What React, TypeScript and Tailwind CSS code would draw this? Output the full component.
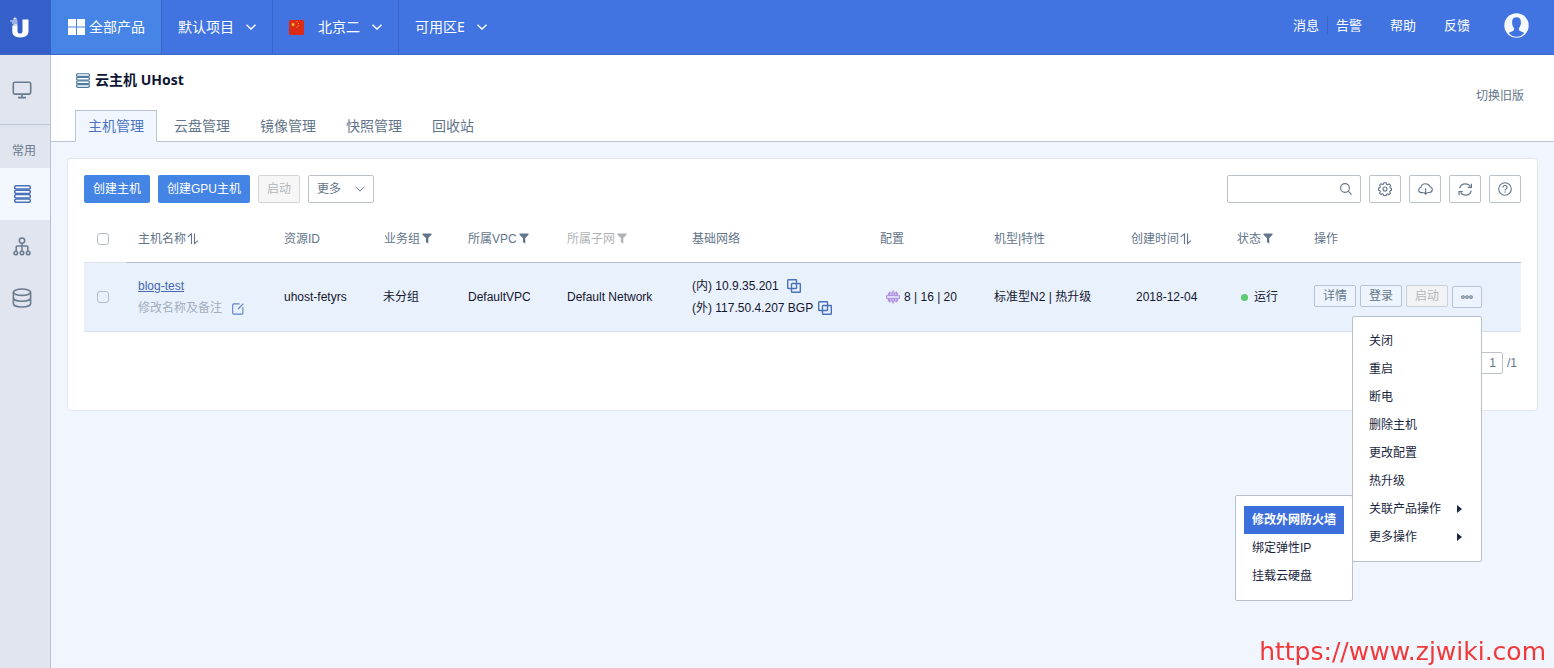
import React, { ReactNode } from "react";

const Chevron = ({ thin }: { thin?: boolean }) => (
  <svg width="10" height="6" viewBox="0 0 10 6" fill="none" stroke="currentColor" strokeWidth={thin ? 1 : 1.4} aria-hidden="true">
    <path d="M0.5 0.700 5 5.100 9.500 0.700" />
  </svg>
);

const SortIcon = () => (
  <svg width="12" height="12" viewBox="0 0 12 12" fill="none" stroke="currentColor" strokeWidth="1.1" aria-hidden="true">
    <path d="M0.800 3.800 4.500 0.900v10.100M7.500 0.500V10.600l3.300-3" />
  </svg>
);

const FilterIcon = () => (
  <svg width="10" height="11" viewBox="0 0 10 11" fill="currentColor" aria-hidden="true">
    <path d="M0.500 0.500h9v1.200L6.300 5v5.500L3.900 9.300V5L0.500 1.700z" />
  </svg>
);

const StackIcon = ({ size }: { size: number }) => (
  <svg width={size} height={size + 1} viewBox="0 0 17 18" fill="none" stroke="currentColor" strokeWidth="1.5" aria-hidden="true">
    <rect x="0.700" y="0.800" width="15.600" height="3.300" rx="1.500" />
    <rect x="0.700" y="5.200" width="15.600" height="3.300" rx="1.500" />
    <rect x="0.700" y="9.600" width="15.600" height="3.300" rx="1.500" />
    <rect x="0.700" y="14" width="15.600" height="3.300" rx="1.500" />
  </svg>
);

const CopyIcon = () => (
  <svg width="14" height="14" viewBox="0 0 14 14" fill="none" stroke="currentColor" strokeWidth="1.4" aria-hidden="true">
    <rect x="0.7" y="0.7" width="8.8" height="8.8" rx="0.6" />
    <rect x="4.5" y="4.5" width="8.8" height="8.8" rx="0.6" />
  </svg>
);

const TopItem = ({ children, className = "" }: { children: ReactNode; className?: string }) => (
  <button type="button" className={`flex items-center gap-3 px-4 ${className}`}>
    {children}
  </button>
);

const SideItem = ({ label, active, children }: { label: string; active?: boolean; children: ReactNode }) => (
  <a
    href="#"
    aria-label={label}
    className={`flex h-13 items-center pl-3 ${active ? "bg-[#f2f8fe] text-[#4a72b8]" : "text-[#697b8e]"}`}
  >
    {children}
  </a>
);

const ToolButton = ({ label, children }: { label: string; children: ReactNode }) => (
  <button
    type="button"
    aria-label={label}
    className="flex h-7 w-8 items-center justify-center rounded-xs border border-[#bcc2cc] bg-white text-[#63758a]"
  >
    {children}
  </button>
);

const Check = ({ label }: { label: string }) => (
  <input
    type="checkbox"
    aria-label={label}
    className="ml-[13px] block size-3 appearance-none rounded-[3px] border border-[#b5bcc8] bg-transparent"
  />
);

const Th = ({ children, muted }: { children: ReactNode; muted?: boolean }) => (
  <th scope="col" className={`h-12 border-b border-[#b9c0cb] pl-3 text-left font-normal ${muted ? "text-[#b0b3b6]" : "text-[#63758a]"}`}>
    <span className="flex items-center gap-px whitespace-nowrap">{children}</span>
  </th>
);

const rowButton = "h-[22px] w-[42px] rounded-xs border border-[#b9c3d6] bg-[#eef4fd] text-[#63758a]";
const menuItem = "flex h-7 w-full items-center px-2 text-left whitespace-nowrap";

const actions = ["关闭", "重启", "断电", "删除主机", "更改配置", "热升级"];

const Arrow = () => (
  <svg className="mr-[3px] ml-auto" width="5" height="8" viewBox="0 0 5 8" fill="currentColor" aria-hidden="true">
    <path d="M0 0l5 4-5 4z" />
  </svg>
);

function Header() {
  return (
    <header className="flex h-[55px] border-b border-[#3d69c4] bg-[#4174e0] font-['Noto_Sans','Noto_Sans_CJK_SC',sans-serif] text-sm text-white">
      <a href="#" aria-label="UCloud" className="flex w-[51px] items-center bg-[#3660c9] pl-[10px]">
        <svg width="20" height="21" viewBox="0 0 20 21" fill="#fff" aria-hidden="true">
          <path d="M2.300 8.500H7.500V14.200c0 1.600.900 2.400 2.500 2.400s2.500-.8 2.500-2.400V2.400h6V14.200c0 3.900-3 6.200-8.200 6.200s-8-2.300-8-6.200z" />
          <path d="M3.200 1.600h1V0.400h1.400v1.200h1.300v1H3.200zM0.200 3.500h7.300v1H0.200zM2 5.400h5.500v1H2zM3.400 7.200h4.100v1.400H3.400z" />
        </svg>
      </a>
      <button type="button" className="flex w-[110px] items-center gap-1 bg-[#4685e6] pl-[17px]">
        <svg width="17" height="16" viewBox="0 0 17 16" fill="#fff" aria-hidden="true">
          <path d="M0 0h8v7.500H0zM9 0h8v7.500H9zM0 8.500h8V16H0zM9 8.500h8V16H9z" />
        </svg>
        全部产品
      </button>
      <TopItem className="border-l border-[#3a64c8]">
        默认项目
        <Chevron />
      </TopItem>
      <TopItem className="border-x border-[#3a64c8]">
        <svg className="mr-[2px]" width="15" height="15" viewBox="0 0 14 14" aria-hidden="true">
          <rect width="14" height="14" rx="1.500" fill="#dc2a14" />
          <path d="M3.800 2l.6 1.400 1.500.1-1.200 1 .4 1.500-1.300-.8-1.300.8.400-1.500-1.200-1 1.500-.1z" fill="#f8c832" />
          <path d="M7 1.200h1v1H7zM8.300 2.800h1v1h-1zM8.300 4.800h1v1h-1zM7 6.300h1v1H7z" fill="#ee9a2c" />
        </svg>
        北京二
        <Chevron />
      </TopItem>
      <TopItem>
        可用区E
        <Chevron />
      </TopItem>
      <nav className="ml-auto flex items-center pr-[25px] pb-1 text-[13px]">
        <a href="#" className="border-r border-[#3a64c8] pr-2">消息</a>
        <a href="#" className="ml-2">告警</a>
        <a href="#" className="ml-7">帮助</a>
        <a href="#" className="ml-7">反馈</a>
        <a href="#" aria-label="账户" className="ml-[34px]">
          <svg width="25" height="25" viewBox="0 0 25 25" aria-hidden="true">
            <circle cx="12.500" cy="12.500" r="12.200" fill="#f6faff" />
            <path d="M12.500 4.200c-3.100 0-4.400 1.700-4.400 4.800 0 2.600.5 4.500 1.700 5.700.4.600.4 2.200-.2 2.800-1.300 1-3.600 1.500-4.800 2.400l3.400 3c1.300.5 2.800.8 4.300.8s3-.3 4.300-.8l3.400-3c-1.200-.9-3.500-1.400-4.800-2.400-.6-.6-.6-2.200-.2-2.800 1.200-1.200 1.700-3.100 1.700-5.700 0-3.100-1.300-4.800-4.400-4.800z" fill="#4174e0" />
          </svg>
        </a>
      </nav>
    </header>
  );
}

function Sidebar() {
  return (
    <aside className="w-[51px] shrink-0 border-r border-[#b9c2d2] bg-[#e1e5f0] text-[#697b8e]">
      <a href="#" aria-label="控制台" className="flex h-[70px] items-center border-b border-[#bdc6d4] pl-3">
        <svg width="20" height="18" viewBox="0 0 20 18" fill="none" stroke="currentColor" strokeWidth="1.600" aria-hidden="true">
          <rect x="1.300" y="1.300" width="17.400" height="11.800" rx="1.500" />
          <path d="M10 13v3.500M6 16.600h8" />
        </svg>
      </a>
      <p className="h-[43px] pt-[17px] pl-3 text-xs leading-[18px]">常用</p>
      <SideItem label="云主机" active>
        <span className="pl-[2px]"><StackIcon size={17} /></span>
      </SideItem>
      <SideItem label="网络">
        <svg width="20" height="19" viewBox="0 0 20 19" fill="none" stroke="currentColor" strokeWidth="1.500" aria-hidden="true">
          <circle cx="10" cy="3.600" r="2.700" />
          <path d="M10 6.300v8M4.200 14.200V10c0-.6.400-1 1-1h9.600c.6 0 1 .4 1 1v4.200" />
          <circle cx="3.800" cy="16" r="1.800" />
          <circle cx="10" cy="16" r="1.800" />
          <circle cx="16.200" cy="16" r="1.800" />
        </svg>
      </SideItem>
      <SideItem label="数据库">
        <svg width="20" height="20" viewBox="0 0 20 20" fill="none" stroke="currentColor" strokeWidth="1.600" aria-hidden="true">
          <ellipse cx="10" cy="4.200" rx="8.600" ry="3.200" />
          <path d="M1.400 4.200v11.600c0 1.800 3.800 3.200 8.600 3.200s8.600-1.400 8.600-3.200V4.200M1.400 10c0 1.800 3.800 3.200 8.600 3.200s8.600-1.400 8.600-3.200" />
        </svg>
      </SideItem>
    </aside>
  );
}

function TitleBar() {
  const tabs = ["主机管理", "云盘管理", "镜像管理", "快照管理", "回收站"];
  return (
    <div className="flex items-start justify-between border-b border-[#b9c3d2] bg-white pr-[30px] pl-6 font-['Noto_Sans','Noto_Sans_CJK_SC',sans-serif]">
      <div>
        <h1 className="flex items-center gap-[5px] pt-4 pl-px text-sm leading-[18px] font-bold text-[#0d1633]">
          <span className="text-[#4d7ba0]"><StackIcon size={14} /></span>
          云主机 UHost
        </h1>
        <nav className="mt-[21px] -mb-px flex gap-1 text-sm">
          {tabs.map((t, i) => (
            <a
              key={t}
              href="#"
              className={`flex h-8 items-center border px-3 ${
                i === 0
                  ? "border-[#b9c3d2] border-b-[#f1f5fd] bg-[#f1f5fd] text-[#4a74c4]"
                  : "border-transparent text-[#63758a]"
              }`}
            >
              {t}
            </a>
          ))}
        </nav>
      </div>
      <a href="#" className="pt-[33px] text-xs text-[#63758a]">切换旧版</a>
    </div>
  );
}

function Toolbar() {
  return (
    <div className="flex items-center gap-2">
      <button type="button" className="h-7 rounded-xs bg-[#4484e4] px-[9px] text-white">创建主机</button>
      <button type="button" className="h-7 rounded-xs bg-[#4484e4] px-[9px] text-white">创建GPU主机</button>
      <button type="button" disabled className="h-7 rounded-xs border border-[#d2d4d8] bg-[#f6f6f7] px-2 text-[#b4b6ba]">启动</button>
      <button type="button" className="flex h-7 w-[66px] items-center justify-between rounded-xs border border-[#bcc2cc] bg-white px-2 text-[#63758a]">
        更多
        <Chevron thin />
      </button>
      <div className="ml-auto flex h-7 w-[134px] items-center rounded-xs border border-[#bcc2cc] bg-white pr-2 text-[#63758a]">
        <input type="text" aria-label="搜索" className="w-full min-w-0 bg-transparent px-2 outline-none" />
        <svg className="shrink-0" width="12" height="12" viewBox="0 0 12 12" fill="none" stroke="currentColor" strokeWidth="1.100" aria-hidden="true">
          <circle cx="5" cy="5" r="4.400" />
          <path d="M8.200 8.200 11.600 11.600" />
        </svg>
      </div>
      <ToolButton label="设置">
        <svg width="14" height="14" viewBox="0 0 14 14" fill="none" stroke="currentColor" strokeWidth="1.100" strokeLinejoin="round" aria-hidden="true">
          <path d="M5.800 0.700h2.400l.4 1.600 1 .4 1.500-.8 1.500 1.500-.8 1.500.4 1 1.300.3v2.200l-1.400.4-.4 1 .8 1.400-1.500 1.500-1.400-.8-1 .4-.4 1.300H5.800l-.4-1.400-1-.4-1.400.8-1.500-1.500.8-1.400-.4-1-1.300-.4V5.900l1.400-.3.400-1-.8-1.400 1.500-1.500 1.400.8 1-.4z" />
          <circle cx="7" cy="7" r="2" />
        </svg>
      </ToolButton>
      <ToolButton label="下载">
        <svg width="15" height="12" viewBox="0 0 15 12" fill="none" stroke="currentColor" strokeWidth="1.100" aria-hidden="true">
          <path d="M5.500 9.600H3.700C2 9.600.7 8.400.7 6.900c0-1.300.9-2.300 2.200-2.600C3.300 2.200 5.200.7 7.500.7s3.900 1.200 4.500 3c1.300.3 2.300 1.400 2.300 2.800 0 1.600-1.300 3-3 3H9.700" />
          <path d="M7.600 5.200v6M5.700 9.300l1.900 1.900 1.900-1.900" />
        </svg>
      </ToolButton>
      <ToolButton label="刷新">
        <svg width="15" height="13" viewBox="0 0 15 13" fill="none" stroke="currentColor" strokeWidth="1.200" aria-hidden="true">
          <path d="M1.700 5.200C2.300 2.600 4.600.8 7.300.8c2.100 0 4 1 5.100 2.700M13.300 7.700c-.6 2.600-2.900 4.500-5.600 4.500-2.200 0-4.100-1.100-5.100-2.900" />
          <path d="M13.400.7v3.600H9.800M1 12.300V8.500h3.800" />
        </svg>
      </ToolButton>
      <ToolButton label="帮助">
        <svg width="14" height="14" viewBox="0 0 14 14" fill="none" stroke="currentColor" strokeWidth="1.100" aria-hidden="true">
          <circle cx="7" cy="7" r="6.300" />
          <path d="M4.900 5.600c0-1.300.8-2.100 2.100-2.100s2.100.8 2.100 1.900c0 1.500-2.100 1.500-2.100 3.200M7 9.600v1.200" />
        </svg>
      </ToolButton>
    </div>
  );
}

function ActionMenu() {
  return (
    <div className="relative pt-px">
      <button type="button" aria-label="更多操作" className="flex h-[22px] w-[30px] items-center justify-center rounded-xs border border-[#b9c3d6] bg-[#eef4fd] text-[#63758a]">
        <svg width="12" height="4" viewBox="0 0 12 4" fill="none" stroke="currentColor" strokeWidth="1.100" aria-hidden="true">
          <circle cx="2" cy="2" r="1.300" />
          <circle cx="6" cy="2" r="1.300" />
          <circle cx="10" cy="2" r="1.300" />
        </svg>
      </button>
      <ul className="absolute top-full right-0 z-10 mt-2 w-[130px] rounded-xs border border-[#b9c0cb] bg-white px-2 py-[10px] text-[#1b2740]">
        {actions.map((a) => (
          <li key={a}>
            <button type="button" className={menuItem}>{a}</button>
          </li>
        ))}
        <li className="relative">
          <button type="button" className={menuItem}>关联产品操作<Arrow /></button>
          <ul className="absolute top-0 right-full mr-2 w-[118px] rounded-xs border border-[#b9c0cb] bg-white px-2 py-[10px]">
            <li><button type="button" className={`${menuItem} bg-[#3d6fdc] font-bold text-white`}>修改外网防火墙</button></li>
            <li><button type="button" className={menuItem}>绑定弹性IP</button></li>
            <li><button type="button" className={menuItem}>挂载云硬盘</button></li>
          </ul>
        </li>
        <li>
          <button type="button" className={menuItem}>更多操作<Arrow /></button>
        </li>
      </ul>
    </div>
  );
}

function HostTable() {
  return (
    <table className="mt-3 w-full table-fixed border-separate border-spacing-0 whitespace-nowrap">
      <colgroup>
        <col className="w-[42px]" />
        <col className="w-[146px]" />
        <col className="w-[100px]" />
        <col className="w-[84px]" />
        <col className="w-[99px]" />
        <col className="w-[125px]" />
        <col className="w-[188px]" />
        <col className="w-[114px]" />
        <col className="w-[137px]" />
        <col className="w-[106px]" />
        <col className="w-[77px]" />
        <col className="w-[219px]" />
      </colgroup>
      <thead>
        <tr>
          <th className="border-b border-[#dde3ec] font-normal"><Check label="全选" /></th>
          <Th>主机名称<SortIcon /></Th>
          <Th>资源ID</Th>
          <Th>业务组<span className="pl-px"><FilterIcon /></span></Th>
          <Th>所属VPC<span className="pl-px"><FilterIcon /></span></Th>
          <Th muted>所属子网<span className="pl-px"><FilterIcon /></span></Th>
          <Th>基础网络</Th>
          <Th>配置</Th>
          <Th>机型|特性</Th>
          <Th>创建时间<SortIcon /></Th>
          <Th>状态<span className="pl-px"><FilterIcon /></span></Th>
          <Th>操作</Th>
        </tr>
      </thead>
      <tbody>
        <tr className="bg-[#e9f1fd] text-[#14162e] [&>td]:h-[69px] [&>td]:border-b [&>td]:border-[#d6deea]">
          <td><Check label="选择 blog-test" /></td>
          <td className="pl-3 leading-[22px]">
            <a href="#" className="block text-[#4468b0] underline">blog-test</a>
            <span className="flex items-center gap-[10px] text-[#a3aebd]">
              修改名称及备注
              <button type="button" aria-label="编辑" className="pt-[2px] text-[#5c83cc]">
                <svg width="12" height="12" viewBox="0 0 12 12" fill="none" stroke="currentColor" strokeWidth="1.100" aria-hidden="true">
                  <path d="M7.500 0.900H1.700c-.6 0-1 .4-1 1v8.200c0 .6.400 1 1 1h8.200c.6 0 1-.4 1-1V4.300M6 6 11.300 0.700" />
                </svg>
              </button>
            </span>
          </td>
          <td className="pl-3">uhost-fetyrs</td>
          <td className="pl-[11px]">未分组</td>
          <td className="pl-3">DefaultVPC</td>
          <td className="pl-3">Default Network</td>
          <td className="pl-3 leading-[22px]">
            <span className="flex items-center gap-2">
              (内) 10.9.35.201
              <button type="button" aria-label="复制内网IP" className="text-[#4a72b8]"><CopyIcon /></button>
            </span>
            <span className="flex items-center gap-[5px]">
              (外) 117.50.4.207 BGP
              <button type="button" aria-label="复制外网IP" className="text-[#4a72b8]"><CopyIcon /></button>
            </span>
          </td>
          <td className="pl-[18px]">
            <span className="flex items-center gap-1">
              <svg width="14" height="14" viewBox="0 0 14 14" fill="#b295e2" aria-hidden="true">
                <path d="M3 1.500h1.500v1h1.700V0.600h1.600v1.900h1.700v-1H11v1.200h1.200v2.600H14v1H0v-1h1.800V2.700H3zM0 7.800h14v1h-1.800v2.600H11v1.100H9.500v-1H7.800v1.900H6.200v-1.900H4.500v1H3v-1.100H1.800V8.800H0z" />
                <path d="M4 4.200h1.500M6.600 4.200h1.300M9 4.200h1.300M4 9.900h1.500M6.600 9.900h1.300M9 9.900h1.300" stroke="#e9dcf6" strokeWidth="0.900" />
                <path d="M0 5.500h1.200v3.200H0zM12.800 5.500H14v3.200h-1.200z" />
              </svg>
              8 | 16 | 20
            </span>
          </td>
          <td className="pl-3">标准型N2 | 热升级</td>
          <td className="pl-[17px]">2018-12-04</td>
          <td className="pl-4">
            <span className="flex items-center gap-[6px]">
              <span className="size-[7px] rounded-full bg-[#5ccb74]" />
              运行
            </span>
          </td>
          <td className="pl-3">
            <div className="flex h-6 items-start gap-1">
              <button type="button" className={rowButton}>详情</button>
              <button type="button" className={rowButton}>登录</button>
              <button type="button" disabled className="h-[22px] w-[42px] rounded-xs border border-[#cdd0d6] bg-[#f2f3f5] text-[#b4b6ba]">启动</button>
              <ActionMenu />
            </div>
          </td>
        </tr>
      </tbody>
    </table>
  );
}

export default function App() {
  return (
    <div className="flex min-h-screen flex-col bg-[#f1f5fd] font-['Liberation_Sans','Noto_Sans_CJK_SC',sans-serif] text-xs">
      <Header />
      <div className="flex flex-1">
        <Sidebar />
        <main className="min-w-0 flex-1">
          <TitleBar />
          <section className="m-4 rounded border border-[#e2e6ee] bg-white p-4">
            <Toolbar />
            <HostTable />
            <div className="mt-5 mb-5 flex items-center justify-end gap-1 pr-1 text-[#63758a]">
              <input type="text" aria-label="页码" defaultValue="1" className="h-[22px] w-[42px] rounded-xs border border-[#bcc2cc] bg-white pr-[6px] text-right" />
              <span>/1</span>
            </div>
          </section>
        </main>
      </div>
      <a href="https://www.zjwiki.com" className="fixed right-2 bottom-0 font-['DejaVu_Sans',sans-serif] text-[25px] leading-8 text-[#f03a3a]">
        https://www.zjwiki.com
      </a>
    </div>
  );
}
